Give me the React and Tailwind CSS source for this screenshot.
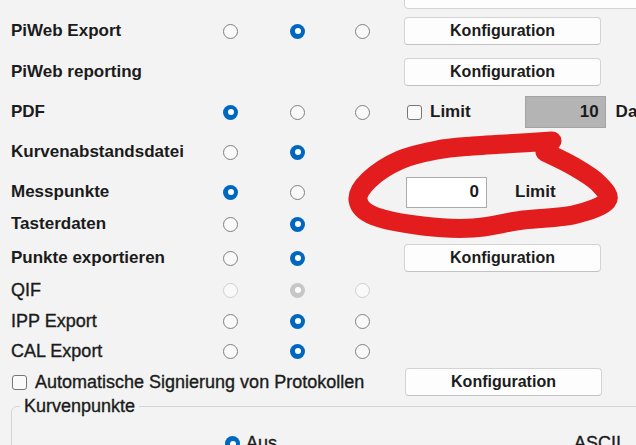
import React from "react";

const FONT = { fontFamily: '"Liberation Sans", Arial, sans-serif' };

// points of the red hand-drawn loop, smoothed with catmull-rom
const loop = [
  [552, 141], [505, 144], [473, 146], [437, 150], [400, 160], [369, 180], [358, 200],
  [374, 216], [423, 226], [473, 228], [523, 220], [573, 215], [607, 201],
  [598, 183], [573, 166], [545, 152],
];

function smoothPath(pts) {
  let d = `M${pts[0][0]},${pts[0][1]}`;
  for (let i = 0; i < pts.length - 1; i++) {
    const p0 = pts[i - 1] || pts[i];
    const p1 = pts[i];
    const p2 = pts[i + 1];
    const p3 = pts[i + 2] || p2;
    const c1 = [p1[0] + (p2[0] - p0[0]) / 6, p1[1] + (p2[1] - p0[1]) / 6];
    const c2 = [p2[0] - (p3[0] - p1[0]) / 6, p2[1] - (p3[1] - p1[1]) / 6];
    d += ` C${c1[0]},${c1[1]} ${c2[0]},${c2[1]} ${p2[0]},${p2[1]}`;
  }
  return d;
}

function Radio({ on, disabled }) {
  if (on) {
    return (
      <span
        className={`block w-[15px] h-[15px] rounded-full flex items-center justify-center ${
          disabled ? "bg-[#c6c6c6]" : "bg-[#0067c0]"
        }`}
      >
        <span className="block w-[6px] h-[6px] rounded-full bg-white" />
      </span>
    );
  }
  return (
    <span
      className={`block w-[15px] h-[15px] rounded-full border bg-[#f9f9f9] ${
        disabled ? "border-[#cfcfcf]" : "border-[#808080]"
      }`}
    />
  );
}

function Check() {
  return <span className="block w-[15px] h-[15px] rounded-[3px] border border-[#767676] bg-[#fafafa] shrink-0" />;
}

function KonfigButton({ label = "Konfiguration" }) {
  return (
    <button className="w-[197px] h-[28px] shrink-0 rounded-[4px] border border-[#d3d3d3] border-b-[#c2c2c2] bg-[#fdfdfd] text-[16px] font-bold text-[#1b1b1b] leading-none">
      {label}
    </button>
  );
}

// r = array of 3 radio states: null (none), "on", "off", "don", "doff"
function Row({ h, label, r = [null, null, null], bold = true, children }) {
  return (
    <div className="flex items-center shrink-0" style={{ height: h }}>
      <div
        className={`w-[223px] shrink-0 pl-[11px] whitespace-nowrap ${
          bold ? "text-[17px] font-bold" : "text-[18px] [-webkit-text-stroke:0.35px_#1b1b1b]"
        }`}
      >
        {label}
      </div>
      {r.map((s, i) => (
        <div
          key={i}
          className={`w-[15px] shrink-0 flex ${i === 1 ? "ml-[52px]" : i === 2 ? "ml-[50px]" : ""}`}
        >
          {s && <Radio on={s === "on" || s === "don"} disabled={s === "don" || s === "doff"} />}
        </div>
      ))}
      <div className="ml-[34px] shrink-0 flex items-center">{children}</div>
    </div>
  );
}

export default function App() {
  return (
    <div
      className="relative w-[636px] h-[445px] overflow-hidden bg-[#f3f3f3] text-[#1b1b1b] flex flex-col"
      style={FONT}
    >
      {/* partly scrolled-off button */}
      <div className="h-[11px] shrink-0 flex">
        <button className="ml-[404px] mt-[-21px] w-[260px] h-[30px] shrink-0 rounded-[4px] border border-[#d3d3d3] bg-[#fdfdfd] text-[16px] font-bold leading-none flex items-start pt-[4px] pl-[64px] whitespace-nowrap">
          Anzeige (Export)
        </button>
      </div>

      <Row h={40} label="PiWeb Export" r={["off", "on", "off"]}>
        <KonfigButton />
      </Row>
      <Row h={42} label="PiWeb reporting">
        <KonfigButton />
      </Row>
      <Row h={38} label="PDF" r={["on", "off", "off"]}>
        <div className="flex items-center whitespace-nowrap">
          <span className="ml-[3px]">
            <Check />
          </span>
          <span className="ml-[8px] text-[17px] font-bold">Limit</span>
          <div className="ml-[54px] w-[81px] h-[32px] shrink-0 bg-[#b4b4b4] border border-[#a3a3a3] flex items-center justify-end pr-[6px] text-[17px] font-bold">
            10
          </div>
          <span className="ml-[10px] text-[17px] font-bold">Dateien</span>
        </div>
      </Row>
      <Row h={42} label="Kurvenabstandsdatei" r={["off", "on", null]} />
      <Row h={38} label="Messpunkte" r={["on", "off", null]}>
        <div className="flex items-center whitespace-nowrap">
          <div className="ml-[2px] w-[81px] h-[31px] shrink-0 bg-white border border-[#ababab] flex items-center justify-end pr-[7px] text-[17px] font-bold">
            0
          </div>
          <span className="ml-[28px] text-[17px] font-bold">Limit</span>
        </div>
      </Row>
      <Row h={26} label="Tasterdaten" r={["off", "on", null]} />
      <Row h={42} label="Punkte exportieren" r={["off", "on", null]}>
        <KonfigButton />
      </Row>
      <Row h={22} label="QIF" bold={false} r={["doff", "don", "doff"]} />
      <Row h={40} label="IPP Export" bold={false} r={["off", "on", "off"]} />
      <Row h={20} label="CAL Export" bold={false} r={["off", "on", "off"]} />

      <div className="h-[42px] shrink-0 flex items-center">
        <div className="w-[405px] shrink-0 pl-[12px] flex items-center whitespace-nowrap">
          <Check />
          <span className="ml-[8px] text-[18px] [-webkit-text-stroke:0.35px_#1b1b1b]">
            Automatische Signierung von Protokollen
          </span>
        </div>
        <KonfigButton />
      </div>

      <fieldset className="mt-[-8px] ml-[11px] w-[700px] h-[80px] shrink-0 border border-[#d6d6d6] rounded-[6px] px-[8px]">
        <legend className="px-[4px] text-[18px] leading-[22px] [-webkit-text-stroke:0.35px_#1b1b1b]">
          Kurvenpunkte
        </legend>
        <div className="flex items-center mt-[13px] text-[18px] [-webkit-text-stroke:0.35px_#1b1b1b]">
          <span className="ml-[205px]">
            <Radio on />
          </span>
          <span className="ml-[6px]">Aus</span>
          <span className="ml-[297px]">ASCII</span>
        </div>
      </fieldset>

      {/* red marker scribble */}
      <svg className="absolute inset-0 pointer-events-none" width="636" height="445">
        <path
          d={smoothPath(loop)}
          fill="none"
          stroke="#e31d1d"
          strokeWidth="19"
          strokeLinecap="round"
          strokeLinejoin="round"
        />
      </svg>
    </div>
  );
}
